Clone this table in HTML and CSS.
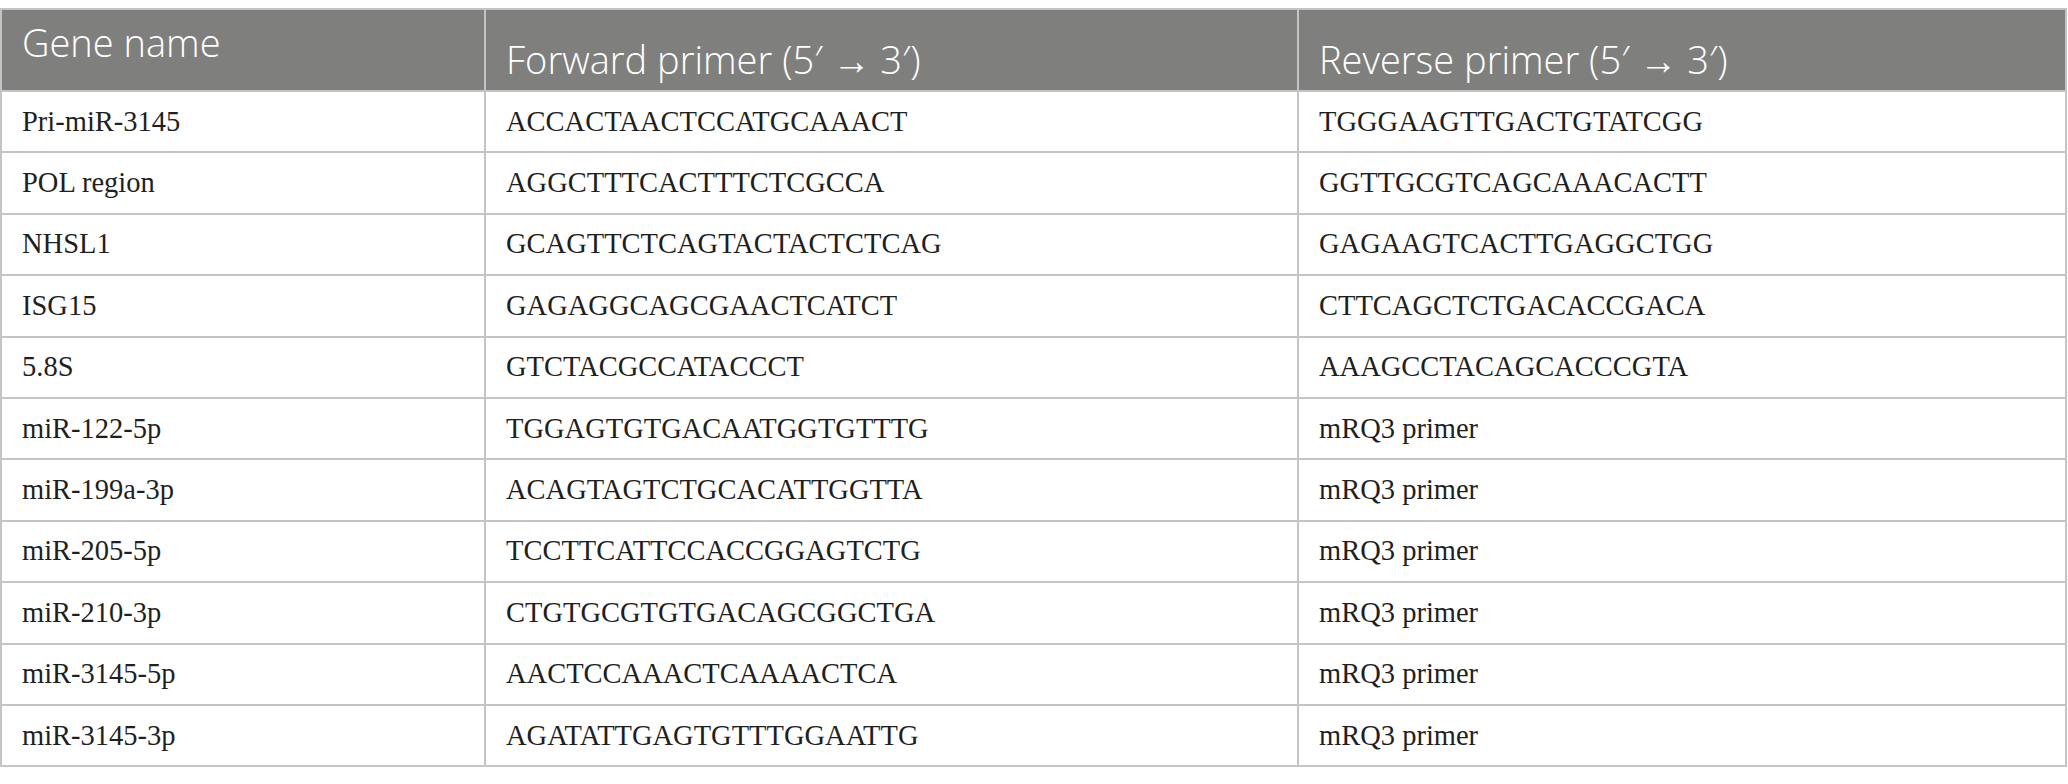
FILE: index.html
```html
<!DOCTYPE html>
<html>
<head>
<meta charset="utf-8">
<link rel="stylesheet" href="styles.css">
</head>
<body>
<table class="primers">
  <thead>
    <tr>
      <th class="c1 top">Gene name</th>
      <th class="c2">Forward primer (5′ → 3′)</th>
      <th class="c3">Reverse primer (5′ → 3′)</th>
    </tr>
  </thead>
  <tbody>
    <tr><td>Pri-miR-3145</td><td>ACCACTAACTCCATGCAAACT</td><td>TGGGAAGTTGACTGTATCGG</td></tr>
    <tr><td>POL region</td><td>AGGCTTTCACTTTCTCGCCA</td><td>GGTTGCGTCAGCAAACACTT</td></tr>
    <tr><td>NHSL1</td><td>GCAGTTCTCAGTACTACTCTCAG</td><td>GAGAAGTCACTTGAGGCTGG</td></tr>
    <tr><td>ISG15</td><td>GAGAGGCAGCGAACTCATCT</td><td>CTTCAGCTCTGACACCGACA</td></tr>
    <tr><td>5.8S</td><td>GTCTACGCCATACCCT</td><td>AAAGCCTACAGCACCCGTA</td></tr>
    <tr><td>miR-122-5p</td><td>TGGAGTGTGACAATGGTGTTTG</td><td>mRQ3 primer</td></tr>
    <tr><td>miR-199a-3p</td><td>ACAGTAGTCTGCACATTGGTTA</td><td>mRQ3 primer</td></tr>
    <tr><td>miR-205-5p</td><td>TCCTTCATTCCACCGGAGTCTG</td><td>mRQ3 primer</td></tr>
    <tr><td>miR-210-3p</td><td>CTGTGCGTGTGACAGCGGCTGA</td><td>mRQ3 primer</td></tr>
    <tr><td>miR-3145-5p</td><td>AACTCCAAACTCAAAACTCA</td><td>mRQ3 primer</td></tr>
    <tr><td>miR-3145-3p</td><td>AGATATTGAGTGTTTGGAATTG</td><td>mRQ3 primer</td></tr>
  </tbody>
</table>
</body>
</html>
```
FILE: styles.css
```css
html, body {
  margin: 0;
  padding: 0;
  background: #ffffff;
}
body {
  padding-top: 8px;
}
.primers {
  width: 2067px;
  border-collapse: collapse;
  table-layout: fixed;
}
.primers th,
.primers td {
  border: 2px solid #c4c4c4;
  text-align: left;
  padding: 0 0 0 20px;
}
.primers th {
  background: #7f807e;
  color: #ffffff;
  font-family: "Open Sans", sans-serif;
  font-weight: 300;
  font-size: 38px;
  height: 70px;
  vertical-align: bottom;
  padding-bottom: 9px;
  line-height: 44px;
}
.primers th.top {
  vertical-align: top;
  padding-top: 10px;
  padding-bottom: 0;
}
.primers .c1 { width: 462px; }
.primers .c2 { width: 791px; }
.primers td {
  font-family: "Liberation Serif", "Times New Roman", serif;
  font-size: 28.5px;
  color: #1f1f1f;
  height: 59.4px;
  vertical-align: middle;
}
```
